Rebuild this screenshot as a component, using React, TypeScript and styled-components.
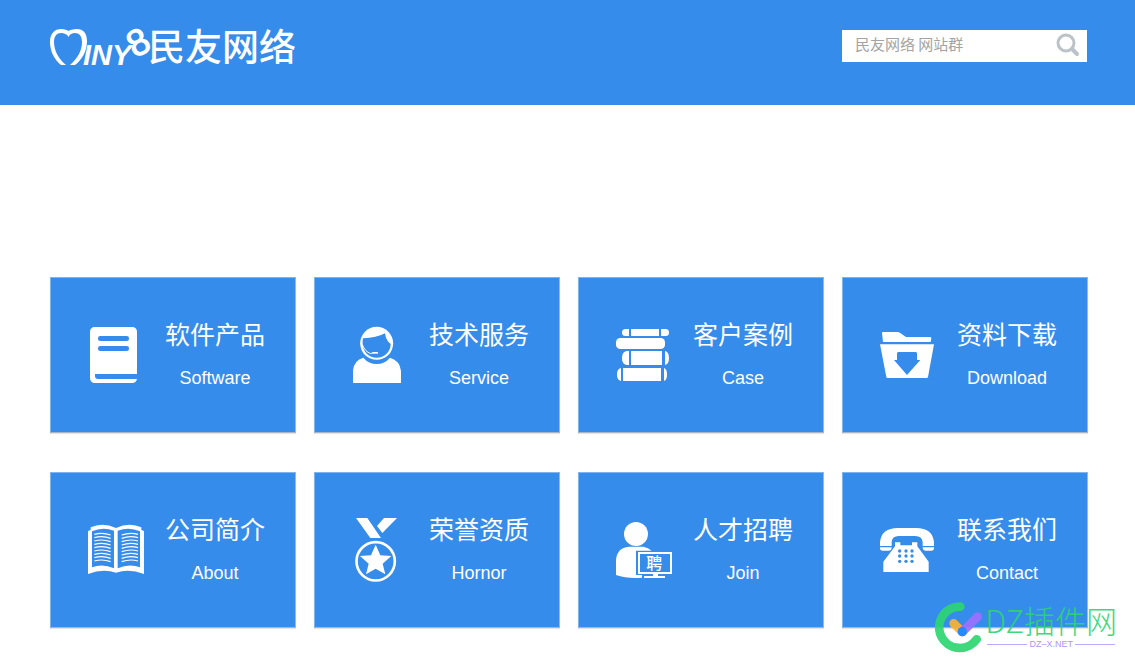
import React from 'react';
import styled, { createGlobalStyle } from 'styled-components';

const BLUE = '#368ceb';

const GlobalStyle = createGlobalStyle`
  *, *::before, *::after { box-sizing: border-box; }
  body {
    margin: 0;
    background: #fff;
    font-family: "Liberation Sans", "Noto Sans CJK SC", sans-serif;
  }
`;

const Page = styled.div`
  position: relative;
  min-height: 100vh;
`;

const Header = styled.header`
  display: flex;
  justify-content: space-between;
  align-items: flex-start;
  min-height: 105px;
  padding: 24px 48px 0 50px;
  background: ${BLUE};
`;

const Logo = styled.a`
  display: flex;
  align-items: flex-start;
  color: #fff;
  text-decoration: none;
`;

const LogoMark = styled.svg`
  flex: none;
  width: 98px;
  height: 46px;
  overflow: visible;
`;

const LogoName = styled.span`
  font: 500 37px/42px "Noto Sans CJK SC", sans-serif;
  white-space: nowrap;
`;

const SearchForm = styled.form`
  display: flex;
  width: 245px;
  height: 32px;
  margin-top: 6px;
  background: #fff;
`;

const SearchInput = styled.input`
  flex: 1;
  min-width: 0;
  padding: 0 0 5px 13px;
  border: 0;
  outline: 0;
  background: transparent;
  color: #666;
  font: 15px "Noto Sans CJK SC", sans-serif;
  &::placeholder { color: #a3a3a3; opacity: 1; }
`;

const SearchButton = styled.button`
  display: flex;
  justify-content: center;
  align-items: center;
  width: 38px;
  padding: 0 0 2px;
  border: 0;
  background: transparent;
  cursor: pointer;
`;

const Tiles = styled.main`
  display: grid;
  grid-template-columns: repeat(4, 1fr);
  gap: 39px 18px;
  padding: 172px 47px 39px 50px;
`;

const Tile = styled.a`
  display: flex;
  align-items: flex-start;
  gap: 14px;
  height: 156px;
  padding: 39px 29px 0 35px;
  border: 1px solid;
  border-color: #7fb4f0 #a9b4c4 #a9b4c4 #7fb4f0;
  box-shadow: 0 1px 1px #e4e4e4;
  background: ${BLUE};
  color: #fff;
  text-decoration: none;
`;

const TileIcon = styled.svg`
  flex: none;
  width: 64px;
  height: 68px;
  overflow: visible;
`;

const TileText = styled.div`
  flex: 1;
  text-align: center;
  white-space: nowrap;
`;

const TileTitle = styled.h2`
  margin: 0;
  font: 400 25px/32px "Noto Sans CJK SC", sans-serif;
`;

const TileSubtitle = styled.p`
  margin: 19px 0 0;
  font: 18px/20px "Liberation Sans", sans-serif;
`;

const Watermark = styled.div`
  position: absolute;
  right: 18px;
  bottom: 14px;
  display: flex;
  align-items: center;
  gap: 2px;
  opacity: 0.92;
  pointer-events: none;
`;

const WatermarkText = styled.div`
  color: #2ed573;
  font: 300 31px/30px "Noto Sans CJK SC", sans-serif;
  white-space: nowrap;
`;

const WatermarkDomain = styled.div`
  display: flex;
  align-items: center;
  gap: 2px;
  margin: 4px 2px 0;
  color: #a78bfa;
  font: 9px/10px "Liberation Sans", sans-serif;
  &::before, &::after {
    content: "";
    flex: 1;
    height: 1px;
    background: #b9a2fb;
  }
`;

const pageLines = Array.from({ length: 9 }, (_, i) => 66 + i * 10);

const icons: Record<string, React.ReactNode> = {
  software: (
    <>
      <path d="M26 30h113a14 14 0 0 1 14 14v127H27v6q0 9 9 9h117q-3 12-14 12H26a14 14 0 0 1-14-14V44a14 14 0 0 1 14-14z" />
      <rect x="36" y="57" width="93" height="15" rx="7" fill={BLUE} />
      <rect x="36" y="87" width="93" height="15" rx="7" fill={BLUE} />
    </>
  ),
  service: (
    <>
      <circle cx="80" cy="79" r="49.5" />
      <path d="M39 64Q80 63 105 49Q108 71 122 81A42 41 0 0 1 38 81Q37 72 39 64z" fill={BLUE} />
      <path d="M37 83Q45 104 62 110L70 107" fill="none" stroke="#fff" strokeWidth="3" />
      <rect x="67" y="105" width="17" height="5" />
      <path d="M9 198V160Q12 130 40 122Q56 141 80 141Q104 141 120 122Q150 131 153 162V198z" />
    </>
  ),
  books: (
    <>
      <path d="M45 36V57H34Q24 57 24 46.5T34 36zM51 36H135V57H51zM141 36H155Q165 36 165 46.5T155 57H141z" />
      <rect x="6" y="63" width="147" height="33" rx="13" />
      <path d="M45 102V144H38Q24 142 24 123T38 102zM51 102H144V144H51zM153 102Q165 105 165 123T153 144z" />
      <path d="M21 153V192Q9 190 9 172.500T21 153zM27 153H141V192H27zM150 153Q159 155 159 172.500T150 192z" />
    </>
  ),
  download: (
    <>
      <path d="M15 45H58Q65 45 71 51L84 60H156Q160 60 160 64L158 75H15L12 48Q12 45 15 45z" />
      <path d="M6 82H168L150 180Q149 183 146 183H29Q25 183 25 180zM60 105L57 108V129H48L87 174L127 129H117V108L114 105z" fillRule="evenodd" />
    </>
  ),
  book: (
    <>
      <path d="M6 57L14 54V46Q50 30 90 48Q130 30 166 46V54L174 57V186Q130 169 90 182Q50 169 6 186z" />
      <path d="M18 58Q50 44 84 56V169Q50 154 18 166zM162 58Q130 44 95 56V169Q130 154 162 166z" fill={BLUE} />
      <g fill="none" stroke="#fff" strokeWidth="3.500">
        {pageLines.map((y) => (
          <path key={y} d={`M25 ${y + 1}Q50 ${y - 6} 74 ${y + 3}M107 ${y + 3}Q132 ${y - 6} 156 ${y + 1}`} />
        ))}
      </g>
    </>
  ),
  medal: (
    <>
      <path d="M18 18H52L93 78H61zM102 18H141L97 63L81 42z" />
      <circle cx="77" cy="148" r="57.500" fill="none" stroke="#fff" strokeWidth="8" />
      <path d="M77 98L91 130L124 132L98 155L106 187L77 170L48 187L56 155L30 132L63 130z" />
    </>
  ),
  recruit: (
    <>
      <circle cx="66" cy="66" r="36" />
      <path d="M6 189V144Q9 107 45 104H88Q103 107 113 116H66V189H84V197Q38 200 6 189z" />
      <rect x="75" y="123" width="96" height="60" fill="none" stroke="#fff" strokeWidth="6" />
      <path d="M117 186H132V192H153V198H90V192H117z" />
      <text x="121" y="171" fontSize="48" fontWeight="500" textAnchor="middle" fontFamily="Noto Sans CJK SC, sans-serif">聘</text>
    </>
  ),
  phone: (
    <>
      <path d="M6 102V91Q10 48 60 48H114Q164 48 168 91V102H134V90Q132 72 112 72H62Q42 72 41 90V102z" />
      <path d="M6 106H41V109Q40 116 33 116H14Q6 116 6 109zM134 106H168V109Q168 116 160 116H142Q135 116 134 109z" />
      <path d="M16 180V149L51 103V91H67V100H102V91H118V103L152 149V180z" />
      <g fill={BLUE}>
        {[117, 132, 148].map((y) => [65, 84, 102].map((x) => <circle key={`${x}-${y}`} cx={x} cy={y} r="5" />))}
      </g>
    </>
  ),
};

const tiles = [
  { title: '软件产品', subtitle: 'Software', icon: 'software' },
  { title: '技术服务', subtitle: 'Service', icon: 'service' },
  { title: '客户案例', subtitle: 'Case', icon: 'books' },
  { title: '资料下载', subtitle: 'Download', icon: 'download' },
  { title: '公司简介', subtitle: 'About', icon: 'book' },
  { title: '荣誉资质', subtitle: 'Hornor', icon: 'medal' },
  { title: '人才招聘', subtitle: 'Join', icon: 'recruit' },
  { title: '联系我们', subtitle: 'Contact', icon: 'phone' },
];

export default function App() {
  return (
    <Page>
      <GlobalStyle />
      <Header>
        <Logo href="#">
          <LogoMark viewBox="0 0 98 46" fill="#fff">
            <path d="M11 41C4 35 0 27 0 18C0 9 5 5 11 5C15 5 17 6 18.500 7C20 6 23 5 27 5C33 5 37 9 37 17C37 27 32 36 25 41H20C28 34 32 26 32 18C32 12 29 9 25 9C22 9 20 10 18.500 13C17 10 14 9 11 9C7 9 4 12 4 18C4 27 9 35 16 41z" />
            <text x="33" y="41" fontSize="29" fontFamily="Liberation Sans, sans-serif" fontWeight="700" fontStyle="italic">INY</text>
            <text
              x="88"
              y="31"
              fontSize="37"
              textAnchor="middle"
              fontFamily="Liberation Sans, sans-serif"
              stroke="#fff"
              strokeWidth="1"
              transform="rotate(-28 88 18)"
            >
              8
            </text>
          </LogoMark>
          <LogoName>民友网络</LogoName>
        </Logo>
        <SearchForm role="search" onSubmit={(e) => e.preventDefault()}>
          <SearchInput type="text" placeholder="民友网络 网站群" aria-label="民友网络 网站群" />
          <SearchButton type="submit" aria-label="搜索">
            <svg width="24" height="24" viewBox="0 0 24 24" fill="none" stroke="#bcc3c8">
              <circle cx="10" cy="10" r="8" strokeWidth="3" />
              <path d="M16 16L21 21" strokeWidth="4" strokeLinecap="round" />
            </svg>
          </SearchButton>
        </SearchForm>
      </Header>
      <Tiles>
        {tiles.map((tile) => (
          <Tile key={tile.title} href="#">
            <TileIcon viewBox="0 0 192 204" fill="#fff" aria-hidden="true">
              {icons[tile.icon]}
            </TileIcon>
            <TileText>
              <TileTitle>{tile.title}</TileTitle>
              <TileSubtitle>{tile.subtitle}</TileSubtitle>
            </TileText>
          </Tile>
        ))}
      </Tiles>
      <Watermark>
        <svg width="48" height="52" viewBox="0 0 144 156" fill="none" strokeLinecap="round">
          <path d="M76 17A62 62 0 1 0 125 115" stroke="#2ed573" strokeWidth="26" />
          <path d="M56 67L82 93" stroke="#f9b233" strokeWidth="26" />
          <path d="M128 47L82 93" stroke="#9b70ff" strokeWidth="26" />
          <circle cx="82" cy="92" r="14" fill="#1482fa" />
        </svg>
        <div>
          <WatermarkText>DZ插件网</WatermarkText>
          <WatermarkDomain>DZ–X.NET</WatermarkDomain>
        </div>
      </Watermark>
    </Page>
  );
}
